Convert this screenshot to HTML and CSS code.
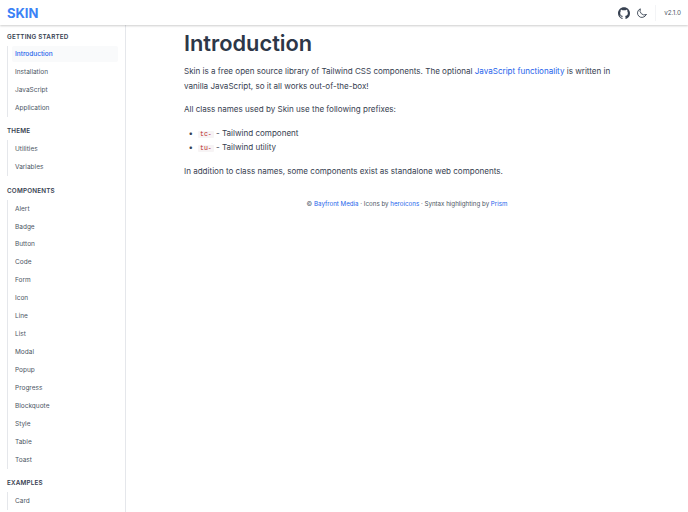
FILE: index.html
```html
<!DOCTYPE html>
<html lang="en">
<head>
<meta charset="utf-8">
<title>Skin - Introduction</title>
<link rel="stylesheet" href="styles.css">
</head>
<body>
<header class="topbar">
  <div class="logo">SKIN</div>
  <div class="top-actions">
    <svg class="icon-gh" viewBox="0 0 24 24" aria-hidden="true"><path fill="#374151" d="M12 .5C5.37.5 0 5.87 0 12.5c0 5.3 3.44 9.8 8.21 11.39.6.11.82-.26.82-.58v-2.03c-3.34.73-4.04-1.61-4.04-1.61-.55-1.39-1.33-1.76-1.33-1.76-1.09-.74.08-.73.08-.73 1.2.08 1.84 1.24 1.84 1.24 1.07 1.83 2.81 1.3 3.5 1 .11-.78.42-1.31.76-1.61-2.67-.3-5.47-1.33-5.47-5.93 0-1.31.47-2.38 1.24-3.22-.12-.3-.54-1.52.12-3.18 0 0 1.01-.32 3.3 1.23a11.5 11.5 0 0 1 6 0c2.29-1.55 3.3-1.23 3.3-1.23.66 1.66.24 2.88.12 3.18.77.84 1.24 1.91 1.24 3.22 0 4.61-2.81 5.63-5.48 5.92.43.37.81 1.1.81 2.22v3.29c0 .32.22.7.83.58A12 12 0 0 0 24 12.5C24 5.87 18.63.5 12 .5z"/></svg>
    <svg class="icon-moon" viewBox="0 0 24 24" aria-hidden="true"><path fill="none" stroke="#4b5563" stroke-width="2" stroke-linecap="round" stroke-linejoin="round" d="M20.35 15.35A9 9 0 0 1 8.65 3.65a9 9 0 1 0 11.7 11.7z"/></svg>
    <span class="version">v2.1.0</span>
  </div>
</header>
<div class="shell">
  <nav class="sidebar">
    <section class="group">
      <h2 class="group-title">GETTING STARTED</h2>
      <ul class="group-list">
        <li class="item active">Introduction</li>
        <li class="item">Installation</li>
        <li class="item">JavaScript</li>
        <li class="item">Application</li>
      </ul>
    </section>
    <section class="group">
      <h2 class="group-title">THEME</h2>
      <ul class="group-list">
        <li class="item">Utilities</li>
        <li class="item">Variables</li>
      </ul>
    </section>
    <section class="group">
      <h2 class="group-title">COMPONENTS</h2>
      <ul class="group-list">
        <li class="item">Alert</li>
        <li class="item">Badge</li>
        <li class="item">Button</li>
        <li class="item">Code</li>
        <li class="item">Form</li>
        <li class="item">Icon</li>
        <li class="item">Line</li>
        <li class="item">List</li>
        <li class="item">Modal</li>
        <li class="item">Popup</li>
        <li class="item">Progress</li>
        <li class="item">Blockquote</li>
        <li class="item">Style</li>
        <li class="item">Table</li>
        <li class="item">Toast</li>
      </ul>
    </section>
    <section class="group">
      <h2 class="group-title">EXAMPLES</h2>
      <ul class="group-list">
        <li class="item">Card</li>
      </ul>
    </section>
  </nav>
  <main class="content">
    <h1 class="title">Introduction</h1>
    <p class="para">Skin is a free open source library of Tailwind CSS components. The optional <a class="link" href="#">JavaScript functionality</a> is written in vanilla JavaScript, so it all works out-of-the-box!</p>
    <p class="para">All class names used by Skin use the following prefixes:</p>
    <ul class="prefixes">
      <li class="prefix"><code class="code">tc-</code> - Tailwind component</li>
      <li class="prefix"><code class="code">tu-</code> - Tailwind utility</li>
    </ul>
    <p class="para">In addition to class names, some components exist as standalone web components.</p>
    <footer class="credits">© <a class="link" href="#">Bayfront Media</a> · Icons by <a class="link" href="#">heroicons</a> · Syntax highlighting by <a class="link" href="#">Prism</a></footer>
  </main>
</div>
</body>
</html>
```
FILE: styles.css
```css
* { box-sizing: border-box; }
html, body { margin: 0; height: 100%; overflow: hidden; }
body { background: #fff; color: #374151; font-family: Inter, "Liberation Sans", sans-serif; }
.topbar {
  height: 25px; display: flex; align-items: center; justify-content: space-between;
  padding: 0 7px 0 7px; background: #fff; box-shadow: 0 1px 2px rgba(0,0,0,.2); position: relative;
}
.logo { font-size: 13px; font-weight: 700; color: #3b82f6; }
.top-actions { display: flex; align-items: center; }
.icon-gh { width: 12px; height: 12px; margin-right: 6px; }
.icon-moon { width: 12px; height: 12px; margin-right: 7px; }
.version { font-size: 6.3px; color: #4b5563; border-left: 1px solid #f3f4f6; padding: 3px 0 3px 8px; line-height: 10px; }
.shell { display: flex; height: 487px; }
.sidebar { width: 126px; flex: none; border-right: 1px solid #e5e7eb; padding: 6px 7px 0; overflow: hidden; }
.group { margin-bottom: 8.3px; }
.group-title { margin: 0 0 3.2px; font-size: 6.3px; line-height: 12px; font-weight: 600; letter-spacing: .2px; color: #374151; }
.group-list { list-style: none; margin: 0; padding: 0 0 0 4px; border-left: 1px solid #e5e7eb; }
.item { height: 17.93px; display: flex; align-items: center; padding-left: 3px; font-size: 6.5px; color: #4b5563; border-radius: 2px; }
.item.active { height: 15.93px; margin: 1px 0; background: #f9fafb; color: #2563eb; font-weight: 500; }
.content { flex: 1; padding: 5px 0 0 58px; }
.title { margin: 0 0 7px; font-size: 21.8px; line-height: 27px; font-weight: 600; color: #2d3748; }
.para { margin: 0 0 8.5px; font-size: 8.05px; line-height: 14.5px; color: #374151; width: 440px; }
.link { color: #2563eb; text-decoration: none; }
.prefixes { list-style: none; margin: 9.5px 0 9.5px; padding: 0 0 0 4.5px; font-size: 8.05px; line-height: 14.5px; }
.prefix { height: 14.5px; }
.prefix::before { content: "•"; display: inline-block; width: 9.5px; color: #374151; }
.code { font-family: "Liberation Mono", monospace; font-size: 6.5px; line-height: 1; color: #b91c1c; background: #f7f4f5; padding: 0 2px; border-radius: 1px; }
.credits { margin-top: 21px; width: 446px; text-align: center; font-size: 6.2px; color: #4b5563; }
```
